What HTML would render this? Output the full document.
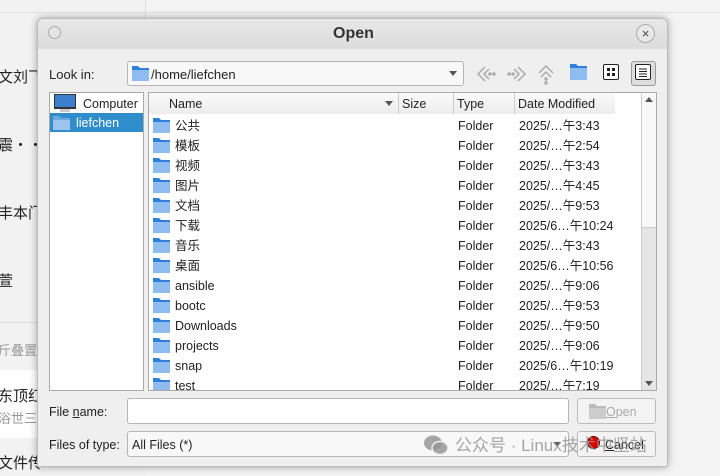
<!DOCTYPE html>
<html><head><meta charset="utf-8"><style>
*{margin:0;padding:0;box-sizing:border-box}
body{width:720px;height:476px;overflow:hidden;background:#f4f4f4;font-family:"Liberation Sans","Noto Sans CJK SC",sans-serif;font-size:12.5px;color:#222;position:relative}
.a{position:absolute}
.bgt{font-size:15px;color:#222;left:-2px}
.dlg{left:37px;top:18px;width:631px;height:449px;background:#efefef;border:1px solid #bbb;border-radius:6px 6px 0 0;box-shadow:0 0 8px rgba(0,0,0,.35)}
.tb{left:0;top:0;width:629px;height:30px;background:linear-gradient(#e8e8e8,#dcdcdc);border-radius:6px 6px 0 0}
.box{background:#fff;border:1px solid #aaa}
.row{position:absolute;left:0;height:20px;line-height:22px;width:490px}
.hdr{background:linear-gradient(#fafafa,#ececec);border-right:1px solid #ccc;height:21px;line-height:22px;top:0}
.btn{border:1px solid #bbb;border-radius:3px;background:#f3f3f3}
</style></head><body>
<div class="a" style="left:0;top:0;width:145px;height:476px;background:#f2f2f2"></div>
<div class="a" style="left:145px;top:0;width:1px;height:20px;background:#ddd"></div>
<div class="a" style="left:0;top:12px;width:720px;height:1px;background:#e2e2e2"></div>
<div class="a bgt" style="top:66px">文刘飞</div>
<div class="a bgt" style="top:134px">震・・</div>
<div class="a bgt" style="top:202px">丰本门</div>
<div class="a bgt" style="top:270px">萱</div>
<div class="a" style="left:0;top:322px;width:40px;height:1px;background:#ddd"></div>
<div class="a bgt" style="top:340px;font-size:13px;color:#999">斤叠置顶</div>
<div class="a" style="left:0;top:370px;width:40px;height:68px;background:#fff"></div>
<div class="a bgt" style="top:385px">东顶红</div>
<div class="a bgt" style="top:408px;font-size:13px;color:#999">浴世三千</div>
<div class="a bgt" style="top:452px">文件传</div>

<div class="a dlg">
 <div class="a tb"></div>
 <div class="a" style="left:10px;top:7px;width:13px;height:13px;border-radius:50%;border:1px solid #aaa;background:#e4e4e4"></div>
 <div class="a" style="left:0;width:631px;top:6px;text-align:center;font-weight:bold;font-size:16px;color:#333">Open</div>
 <div class="a" style="left:598px;top:5px;width:19px;height:19px;border-radius:50%;border:1px solid #aaa;background:#e8e8e8;text-align:center;line-height:17px;font-size:13px;color:#444">×</div>

 <div class="a" style="left:11px;top:48px;font-size:13px">Look in:</div>
 <div class="a box" style="left:89px;top:42px;width:337px;height:25px;border-radius:3px;background:#f8f8f8;border-color:#b5b5b5"></div>
 <svg class="a" style="left:94px;top:46px" width="17" height="16"><path d="M0 1h6l2 2h9v13H0z" fill="#2f7fdb"/><path d="M0 5h17v11H0z" fill="#8fbcf0"/></svg>
 <div class="a" style="left:113px;top:48px;font-size:13px">/home/liefchen</div>
 <div class="a" style="left:411px;top:52px;border:4px solid transparent;border-top:5px solid #555"></div>
 <svg class="a" style="left:437px;top:44px" width="180" height="22" fill="none" stroke="#aaa" stroke-width="1.5">
  <path d="M10 4l-7 7 7 7M14 6l-5 5 5 5"/><circle cx="15" cy="11" r="1"/><circle cx="19" cy="11" r="1"/>
  <path d="M43 4l7 7-7 7M39 6l5 5-5 5"/><circle cx="38" cy="11" r="1"/><circle cx="34" cy="11" r="1"/>
  <path d="M64 10l7-7 7 7M66 14l5-5 5 5"/><circle cx="71" cy="16" r="1"/><circle cx="71" cy="20" r="1"/>
 </svg>
 <svg class="a" style="left:532px;top:44px" width="17" height="17"><path d="M0 1h6l2 2h9v14H0z" fill="#2f7fdb"/><path d="M0 5h17v12H0z" fill="#8fbcf0"/></svg>
 <div class="a" style="left:565px;top:45px;width:16px;height:16px;border:1.5px solid #222;border-radius:2px;background:#fff"></div>
 <svg class="a" style="left:568px;top:48px" width="10" height="10" fill="#222"><rect x="1" y="1" width="3" height="3"/><rect x="6" y="1" width="3" height="3"/><rect x="1" y="6" width="3" height="3"/><rect x="6" y="6" width="3" height="3"/></svg>
 <div class="a btn" style="left:593px;top:42px;width:25px;height:25px;background:#ddd;border-color:#999"></div>
 <div class="a" style="left:597px;top:45px;width:16px;height:16px;border:1.5px solid #222;border-radius:2px;background:#fff"></div>
 <svg class="a" style="left:600px;top:49px" width="10" height="9" stroke="#222"><path d="M1 1h8M1 3.5h8M1 6h8M1 8.5h8"/></svg>

 <div class="a box" style="left:11px;top:73px;width:95px;height:299px"></div>
 <svg class="a" style="left:15px;top:75px" width="24" height="19"><rect x="1" y="0" width="22" height="15" fill="#333"/><rect x="2" y="1" width="20" height="12" fill="#3d7fcf"/><rect x="7" y="15" width="10" height="3" fill="#ccc"/></svg>
 <div class="a" style="left:45px;top:78px">Computer</div>
 <div class="a" style="left:12px;top:94px;width:93px;height:19px;background:#2f8dcb"></div>
 <svg class="a" style="left:15px;top:96px" width="17" height="15"><path d="M0 1h6l2 2h9v12H0z" fill="#6fa8e0"/><path d="M0 5h17v10H0z" fill="#9cc4ec"/></svg>
 <div class="a" style="left:38px;top:97px;color:#fff">liefchen</div>

 <div class="a box" style="left:110px;top:73px;width:509px;height:299px;overflow:hidden">
  <div class="a hdr" style="left:0;width:250px;padding-left:20px">Name<span style="position:absolute;left:236px;top:8px;border:4px solid transparent;border-top:5px solid #555"></span></div>
  <div class="a hdr" style="left:250px;width:55px;padding-left:3px">Size</div>
  <div class="a hdr" style="left:305px;width:61px;padding-left:3px">Type</div>
  <div class="a hdr" style="left:366px;width:100px;padding-left:3px;border-right:none">Date Modified</div>
  <div class="a" style="left:492px;top:0;width:16px;height:299px;background:#e6e6e6;border-left:1px solid #ccc"></div>
  <div class="a" style="left:493px;top:0;width:15px;height:135px;background:#f8f8f8;border-bottom:1px solid #ccc"></div>
  <div class="a" style="left:496px;top:4px;border:4px solid transparent;border-bottom:5px solid #555;border-top:0"></div>
  <div class="a" style="left:496px;top:288px;border:4px solid transparent;border-top:5px solid #555;border-bottom:0"></div>
  <div class="a" id="rows" style="left:0;top:22px"></div>
 </div>

 <div class="a" style="left:11px;top:386px">File <u>n</u>ame:</div>
 <div class="a box" style="left:89px;top:379px;width:442px;height:26px;border-radius:3px;border-color:#b5b5b5"></div>
 <div class="a btn" style="left:539px;top:379px;width:79px;height:26px;color:#aaa;padding:6px 0 0 28px"><u>O</u>pen</div>
 <svg class="a" style="left:551px;top:384px" width="17" height="16"><path d="M0 1h6l2 2h9v13H0z" fill="#bbb"/><path d="M0 5h17v11H0z" fill="#ccc"/></svg>
 <div class="a" style="left:11px;top:419px">Files of type:</div>
 <div class="a box" style="left:89px;top:412px;width:442px;height:26px;border-radius:3px;background:#f8f8f8;border-color:#b5b5b5;padding:6px 0 0 4px">All Files (*)</div>
 <div class="a" style="left:515px;top:423px;border:4px solid transparent;border-top:5px solid #555"></div>
 <div class="a btn" style="left:539px;top:412px;width:79px;height:26px;padding:6px 0 0 27px"><u>C</u>ancel</div>
 <div class="a" style="left:549px;top:417px;width:13px;height:13px;border-radius:50%;background:#d00;border:1px solid #600"></div>
</div>
<svg class="a" style="left:423px;top:434px" width="26" height="22" fill="rgba(150,150,150,.85)"><ellipse cx="10" cy="9" rx="9" ry="7.5"/><ellipse cx="17" cy="14" rx="8" ry="6.5" stroke="#f0f0f0" stroke-width="1.5"/></svg>
<div class="a" style="left:455px;top:431px;font-size:17px;color:rgba(150,150,150,.85)">公众号 · Linux技术中坚站</div>
<script>
var r=[["公共","2025/…午3:43"],["模板","2025/…午2:54"],["视频","2025/…午3:43"],["图片","2025/…午4:45"],["文档","2025/…午9:53"],["下载","2025/6…午10:24"],["音乐","2025/…午3:43"],["桌面","2025/6…午10:56"],["ansible","2025/…午9:06"],["bootc","2025/…午9:53"],["Downloads","2025/…午9:50"],["projects","2025/…午9:06"],["snap","2025/6…午10:19"],["test","2025/…午7:19"]];
var h="";r.forEach(function(x,i){h+='<div class="row" style="top:'+(i*20)+'px"><svg style="position:absolute;left:4px;top:2px" width="17" height="16"><path d="M0 1h6l2 2h9v13H0z" fill="#2f7fdb"/><path d="M0 5h17v11H0z" fill="#8fbcf0"/></svg><span style="position:absolute;left:26px">'+x[0]+'</span><span style="position:absolute;left:309px">Folder</span><span style="position:absolute;left:370px">'+x[1]+'</span></div>'});
document.getElementById("rows").innerHTML=h;
</script>
</body></html>
